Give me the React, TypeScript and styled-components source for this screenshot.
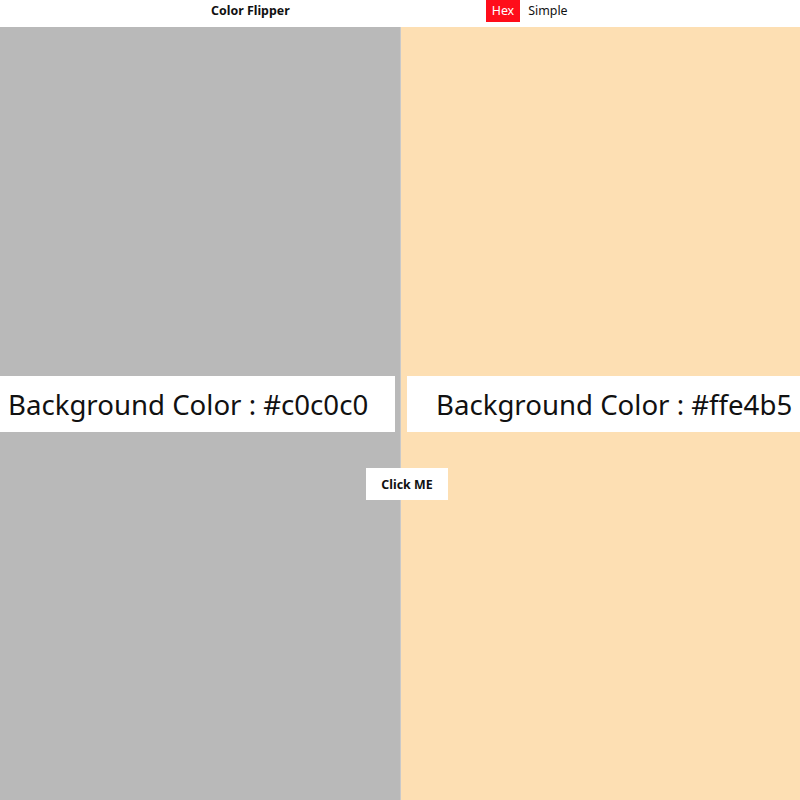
import React from "react";
import styled, { createGlobalStyle } from "styled-components";

const Global = createGlobalStyle`
  html, body { margin: 0; padding: 0; }
  body { font-family: "Noto Sans", "Open Sans", sans-serif; background: #ffffff; }
`;

const Page = styled.div`
  width: 800px;
  height: 800px;
  display: flex;
  flex-direction: column;
  position: relative;
  overflow: hidden;
`;

const Nav = styled.nav`
  height: 27px;
  display: flex;
  align-items: flex-start;
  padding-left: 211px;
  gap: 196px;
  background: #ffffff;
`;

const Title = styled.div`
  font-size: 12.4px;
  font-weight: 700;
  line-height: 22px;
  color: #111;
`;

const Links = styled.div`
  display: flex;
  align-items: center;
  gap: 8px;
`;

const Link = styled.span<{ $active?: boolean }>`
  font-size: 12.4px;
  line-height: 22px;
  height: 22px;
  padding: 0 ${(p) => (p.$active ? "6px" : "0")};
  background: ${(p) => (p.$active ? "#ff0d1a" : "transparent")};
  color: ${(p) => (p.$active ? "#ffffff" : "#111")};
`;

const Panels = styled.main`
  flex: 1;
  display: grid;
  grid-template-columns: 400px 1px 399px;
`;

const Panel = styled.section<{ $bg: string; $side: "left" | "right" }>`
  background: ${(p) => p.$bg};
  display: flex;
  flex-direction: column;
  padding-top: 349px;
  padding-left: ${(p) => (p.$side === "right" ? "6px" : "0")};
  padding-right: ${(p) => (p.$side === "left" ? "5px" : "0")};
`;

const Divider = styled.div`
  background: #c9c9c9;
`;

const ColorBox = styled.div<{ $side: "left" | "right" }>`
  height: 56px;
  background: #ffffff;
  display: flex;
  align-items: center;
  padding-left: ${(p) => (p.$side === "right" ? "29px" : "8px")};
  font-size: 27.6px;
  color: #111;
  white-space: nowrap;
`;

const Button = styled.button`
  position: absolute;
  left: 366px;
  top: 468px;
  width: 82px;
  height: 32px;
  border: none;
  background: #ffffff;
  font-family: "Noto Sans", "Open Sans", sans-serif;
  font-size: 12.4px;
  font-weight: 700;
  color: #111;
  cursor: pointer;
`;

export default function App() {
  const left = "#c0c0c0";
  const right = "#ffe4b5";
  return (
    <Page>
      <Global />
      <Nav>
        <Title>Color Flipper</Title>
        <Links>
          <Link $active>Hex</Link>
          <Link>Simple</Link>
        </Links>
      </Nav>
      <Panels>
        <Panel $bg="#b9b9b9" $side="left">
          <ColorBox $side="left">Background Color : {left}</ColorBox>
        </Panel>
        <Divider />
        <Panel $bg="#fddfb3" $side="right">
          <ColorBox $side="right">Background Color : {right}</ColorBox>
        </Panel>
      </Panels>
      <Button>Click ME</Button>
    </Page>
  );
}
